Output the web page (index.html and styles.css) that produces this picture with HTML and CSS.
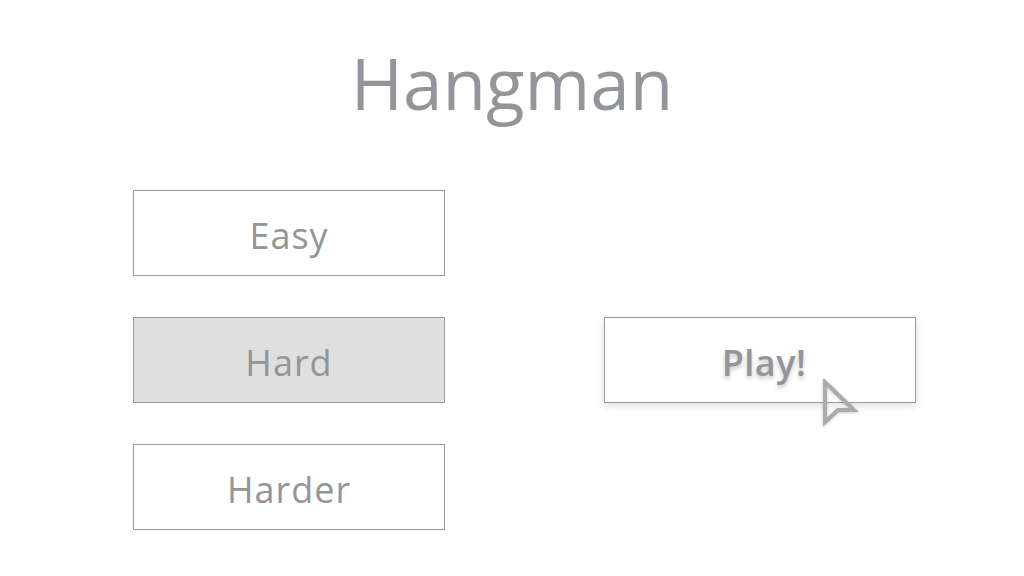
FILE: index.html
```html
<!DOCTYPE html>
<html>
<head>
<meta charset="utf-8">
<link rel="stylesheet" href="styles.css">
</head>
<body>
<div class="app">
  <h1 class="title">Hangman</h1>
  <div class="main">
    <div class="levels">
      <button class="btn">Easy</button>
      <button class="btn selected">Hard</button>
      <button class="btn">Harder</button>
    </div>
    <div class="play-col">
      <div class="play-wrap">
        <button class="btn play">Play!</button>
        <svg class="cursor" width="40" height="50" viewBox="0 0 40 50">
          <path d="M4 3 L4 43 L17 31 L33 31 Z" fill="none" stroke="#a9abad" stroke-width="4" stroke-linejoin="miter"/>
        </svg>
      </div>
    </div>
  </div>
</div>
</body>
</html>
```
FILE: styles.css
```css
html, body {
  margin: 0;
  padding: 0;
  background: #ffffff;
}
body {
  font-family: "Open Sans", "Noto Sans", sans-serif;
  color: #929599;
}
.app {
  width: 1024px;
  height: 576px;
  display: flex;
  flex-direction: column;
}
.title {
  margin: 0;
  padding-top: 33px;
  font-size: 71px;
  font-weight: 400;
  line-height: 100px;
  text-align: center;
  letter-spacing: 0;
}
.main {
  display: flex;
  margin-top: 57px;
  padding-left: 133px;
  gap: 159px;
}
.levels {
  display: flex;
  flex-direction: column;
  gap: 41px;
}
.btn {
  box-sizing: border-box;
  width: 312px;
  height: 86px;
  border: 1px solid #9a9a9a;
  background: #ffffff;
  font-family: "Open Sans", "Noto Sans", sans-serif;
  font-size: 36px;
  letter-spacing: 1px;
  color: #929599;
  padding: 0;
  padding-top: 4px;
  cursor: default;
}
.selected {
  background: #dfdfdf;
}
.play-col {
  display: flex;
  flex-direction: column;
  justify-content: center;
}
.play-wrap {
  position: relative;
}
.play {
  font-weight: 600;
  letter-spacing: 0.5px;
  padding-left: 8px;
  box-shadow: 0 3px 8px rgba(0,0,0,0.12);
  text-shadow: 0 3px 4px rgba(0,0,0,0.22);
}
.cursor {
  position: absolute;
  left: 217px;
  top: 62px;
  filter: drop-shadow(0 1px 1.5px rgba(0,0,0,0.2));
}
```
